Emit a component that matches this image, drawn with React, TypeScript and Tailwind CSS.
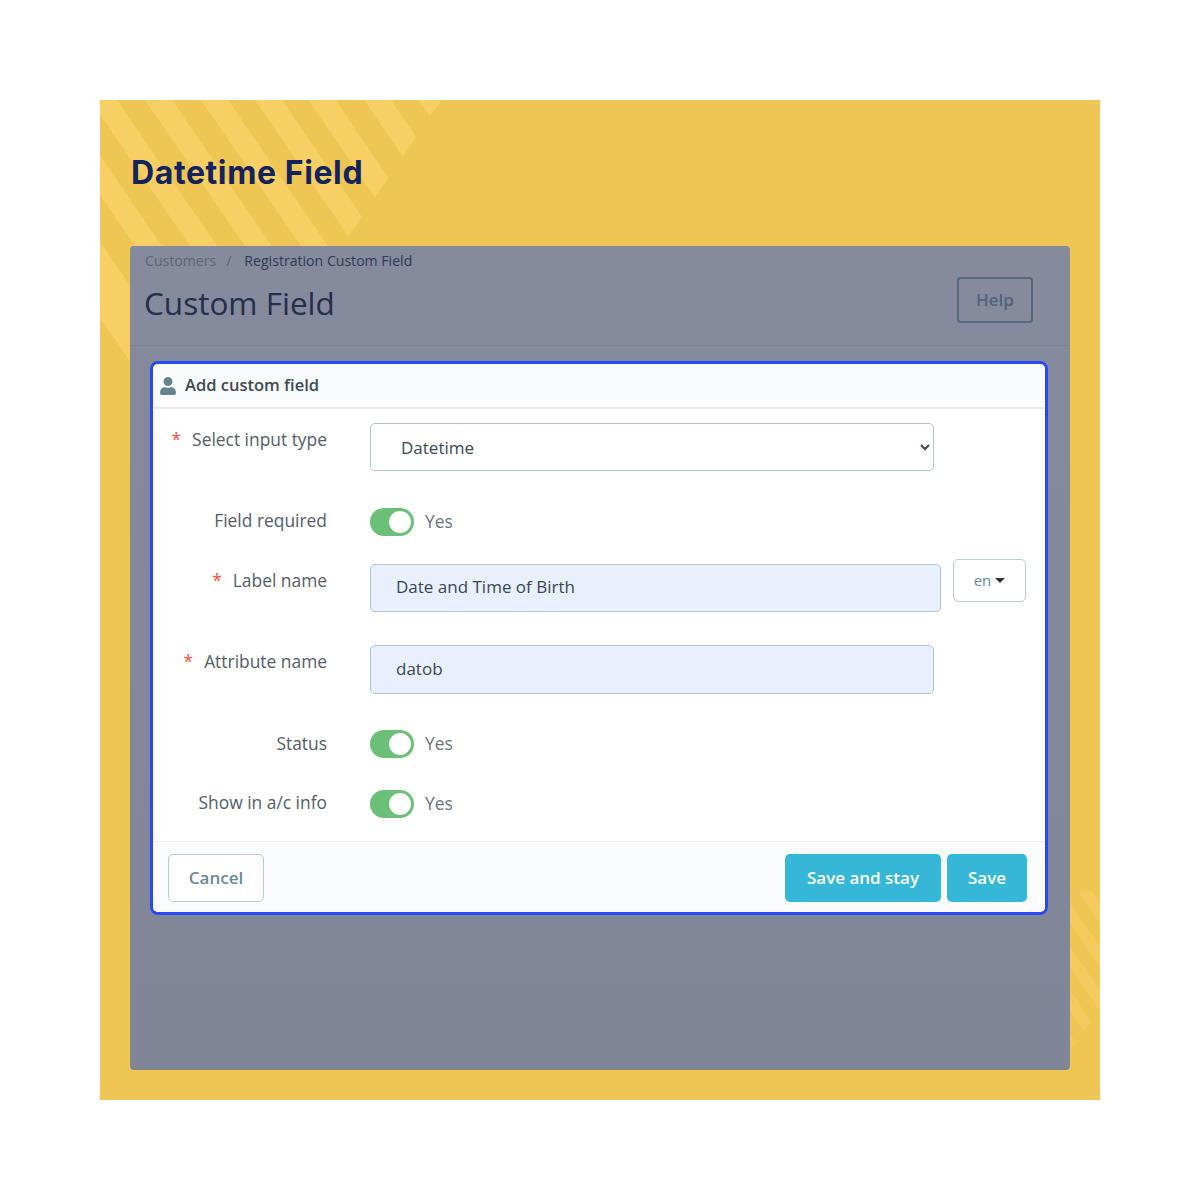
import React from 'react';
import { FaUser } from 'react-icons/fa';

const topStripes = [
  { x: 318.7, w: 27 },
  { x: 264, w: 27 },
  { x: 208.3, w: 27 },
  { x: 155, w: 27 },
  { x: 101, w: 27 },
  { x: 45, w: 27 },
  { x: -10, w: 27 },
  { x: -65, w: 27 },
  { x: -149, w: 52 },
];
const cornerStripes = [436, 406, 376, 346, 316];

function Stripe({ x0, w, fill }: { x0: number; w: number; fill: string }) {
  const h = 1000;
  const dx = h / 1.46;
  return <polygon points={`${x0},0 ${x0 + w},0 ${x0 + w + dx},${h} ${x0 + dx},${h}`} fill={fill} />;
}

function Toggle() {
  return (
    <div className="flex items-center">
      <div className="w-[44px] h-[28px] rounded-full bg-[#6cbf76] flex items-center justify-end pr-[3px]">
        <div className="w-[22px] h-[22px] rounded-full bg-white" />
      </div>
      <span className="ml-[11px] pb-[1px] text-[#6a747e] text-[17.4px]">Yes</span>
    </div>
  );
}

function Label({ text, required }: { text: string; required?: boolean }) {
  return (
    <div className="w-[174px] flex justify-end text-[17.4px] text-[#545d68] leading-[24px] whitespace-nowrap">
      {required && <span className="text-[#f0533f] mr-[11px]">*</span>}
      {text}
    </div>
  );
}

export default function App() {
  return (
    <div className="bg-white p-[100px] h-[1200px]" style={{ fontFamily: '"Open Sans", sans-serif' }}>
      <div className="relative h-[1000px] bg-[#efc553] overflow-hidden">
        <svg className="absolute inset-0" width="1000" height="1000">
          <defs>
            <clipPath id="topCut">
              <polygon points="341.5,0 0,500 0,0" />
            </clipPath>
            <clipPath id="cornerCut">
              <polygon points="970,1000 1000,1000 1000,791 980,791 970,806" />
            </clipPath>
            <clipPath id="cornerEnd">
              <polygon points="970,791 1000,791 1000,910 985,930 970,950" />
            </clipPath>
          </defs>
          <g clipPath="url(#topCut)">
            {topStripes.map((s) => (
              <Stripe key={s.x} x0={s.x} w={s.w} fill="#f8cf64" />
            ))}
          </g>
          <g clipPath="url(#cornerCut)">
            <g clipPath="url(#cornerEnd)">
              {cornerStripes.map((x) => (
                <Stripe key={x} x0={x} w={14} fill="#f5cb5f" />
              ))}
            </g>
          </g>
        </svg>

        <div className="relative h-[146px] pl-[31px] flex items-center">
          <h1 className="text-[32px] font-bold text-[#12235d] tracking-[0.6px]" style={{ fontFamily: 'Inter, sans-serif' }}>
            Datetime Field
          </h1>
        </div>

        <div className="relative mx-[30px] h-[824px] rounded-[4px] bg-gradient-to-b from-[#858a9c] to-[#808597]">
          <div className="h-[100px] border-b border-[#7c8193] pl-[15px] pr-[37px] flex justify-between">
            <div>
              <div className="pt-[5px] text-[14.1px] leading-[20px] flex">
                <span className="text-[#5e667a]">Customers</span>
                <span className="text-[#4f7066] ml-[10px] mr-[13px]">/</span>
                <span className="text-[#2f3b59]">Registration Custom Field</span>
              </div>
              <div className="mt-[10px] -ml-[1px] text-[31.5px] leading-[44px] text-[#232f4d]">Custom Field</div>
            </div>
            <button className="mt-[31px] w-[76px] h-[46px] rounded-[4px] border-2 border-[#566880] text-[#52647c] text-[17px] font-semibold">
              Help
            </button>
          </div>

          <div className="ml-[20px] mt-[15px] w-[898px] h-[554px] rounded-[8px] border-[3px] border-[#2a48f3] bg-white overflow-hidden flex flex-col">
            <div className="h-[45px] shrink-0 bg-[#f9fbfd] border-b-2 border-[#e6ecef] flex items-center pl-[7px]">
              <FaUser className="text-[#67858f] w-[16px] h-[18px]" />
              <span className="ml-[9px] pb-[1px] text-[16.5px] font-semibold text-[#3f4853]">Add custom field</span>
            </div>

            <div className="flex-1">
              <div className="flex mt-[14px]">
                <div className="pt-[4px]">
                  <Label text="Select input type" required />
                </div>
                <select
                  defaultValue="Datetime"
                  className="ml-[43px] w-[564px] h-[48px] rounded-[5px] border border-[#aec5d1] bg-white pl-[26px] pr-[10px] text-[17px] text-[#3b4653]"
                >
                  <option>Datetime</option>
                </select>
              </div>

              <div className="flex items-center mt-[36px] h-[29px]">
                <div className="pb-[3px]">
                  <Label text="Field required" />
                </div>
                <div className="ml-[43px]">
                  <Toggle />
                </div>
              </div>

              <div className="flex mt-[23px]">
                <div className="pt-[9px]">
                  <Label text="Label name" required />
                </div>
                <input
                  readOnly
                  value="Date and Time of Birth"
                  className="ml-[43px] mt-[5px] w-[571px] h-[48px] rounded-[5px] border border-[#aec5d1] bg-[#e8f0fe] px-[25px] pb-[3px] text-[17px] text-[#3b4653]"
                />
                <button className="ml-[12px] w-[73px] h-[43px] rounded-[5px] border border-[#b8ccd6] bg-white text-[#6a8a98] text-[15px] flex items-center justify-center">
                  en
                  <span className="ml-[4px] w-0 h-0 border-x-[5px] border-t-[5px] border-x-transparent border-t-[#333]" />
                </button>
              </div>

              <div className="flex mt-[33px]">
                <div className="pt-[4px]">
                  <Label text="Attribute name" required />
                </div>
                <input
                  readOnly
                  value="datob"
                  className="ml-[43px] w-[564px] h-[49px] rounded-[5px] border border-[#aec5d1] bg-[#e8f0fe] px-[25px] pb-[2px] text-[17px] text-[#3b4653]"
                />
              </div>

              <div className="flex items-center mt-[36px] h-[28px]">
                <div className="pb-[3px]">
                  <Label text="Status" />
                </div>
                <div className="ml-[43px]">
                  <Toggle />
                </div>
              </div>

              <div className="flex items-center mt-[32px] h-[28px]">
                <div className="pb-[4px]">
                  <Label text="Show in a/c info" />
                </div>
                <div className="ml-[43px]">
                  <Toggle />
                </div>
              </div>
            </div>

            <div className="h-[71px] shrink-0 bg-[#fbfcfe] border-t border-[#edf0f2] pl-[15px] pr-[18px] pt-[12px] flex justify-between">
              <button className="w-[96px] h-[48px] rounded-[5px] border border-[#b8ccd6] bg-white text-[#6a8a98] text-[17px] font-semibold">
                Cancel
              </button>
              <div className="flex gap-[6px]">
                <button className="w-[156px] h-[48px] rounded-[5px] bg-[#35b8d8] text-white text-[17px] font-semibold">
                  Save and stay
                </button>
                <button className="w-[80px] h-[48px] rounded-[5px] bg-[#35b8d8] text-white text-[17px] font-semibold">
                  Save
                </button>
              </div>
            </div>
          </div>
        </div>
      </div>
    </div>
  );
}
